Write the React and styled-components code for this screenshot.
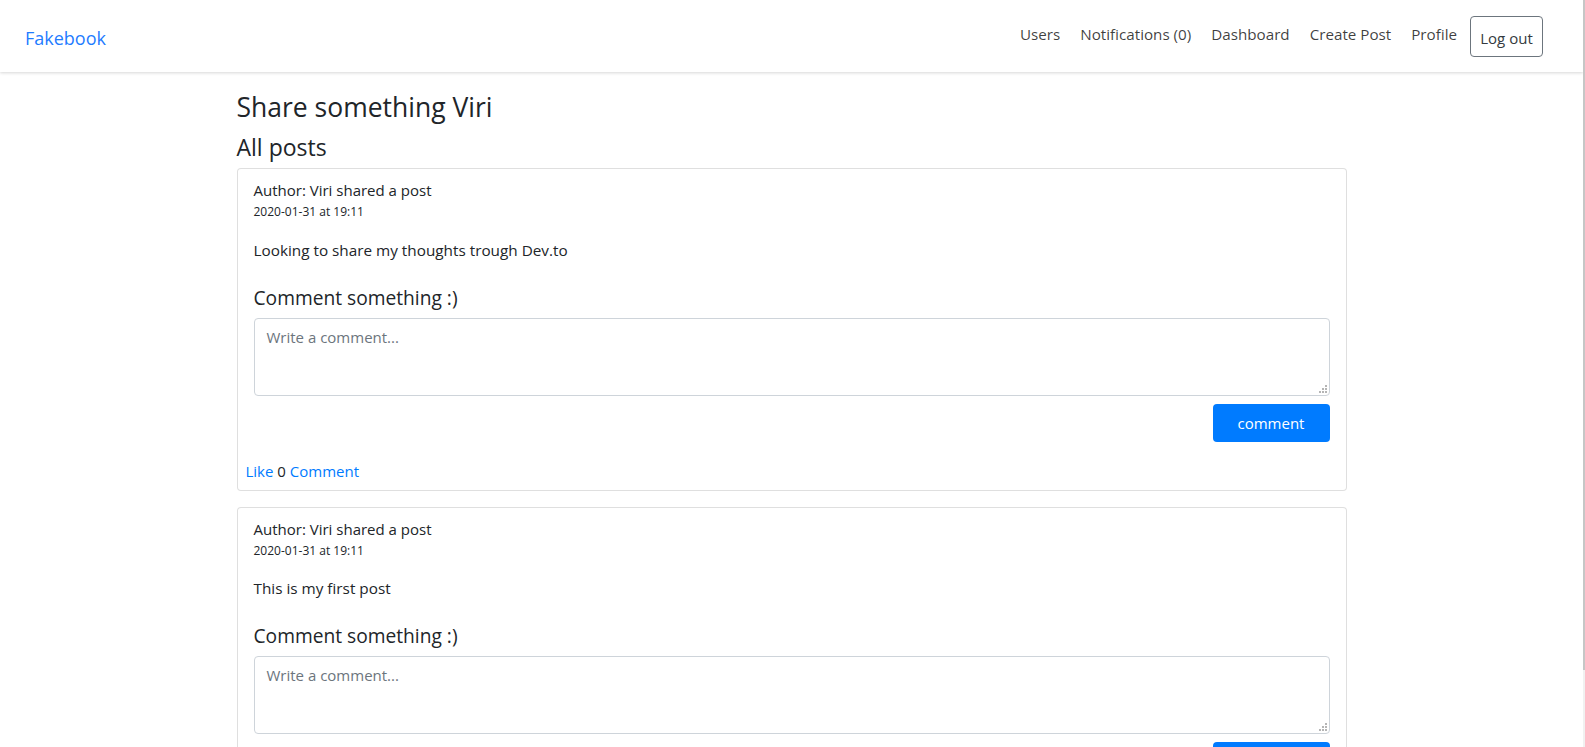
import React from 'react';
import styled, { createGlobalStyle } from 'styled-components';

const POSTS = [
  { id: 1, author: 'Viri', date: '2020-01-31 at 19:11', text: 'Looking to share my thoughts trough Dev.to', likes: 0 },
  { id: 2, author: 'Viri', date: '2020-01-31 at 19:11', text: 'This is my first post', likes: 0 },
];

const NAV_ITEMS = ['Users', 'Notifications (0)', 'Dashboard', 'Create Post', 'Profile'];

// dots of the textarea resize grip, bottom-right triangle
const GRIP_DOTS = [
  [6, 0],
  [3, 3],
  [6, 3],
  [0, 6],
  [3, 6],
  [6, 6],
];

function ResizeGrip() {
  return (
    <Grip width="8" height="8" viewBox="0 0 8 8">
      {GRIP_DOTS.map(([x, y]) => (
        <rect key={`${x}-${y}`} x={x} y={y} width="2" height="2" fill="#b5b5b5" />
      ))}
    </Grip>
  );
}

export default function App() {
  return (
    <>
      <GlobalStyle />
      <ScrollTrack>
        <ScrollThumb />
      </ScrollTrack>
      <Navbar>
        <Brand href="#">Fakebook</Brand>
        <NavList>
          {NAV_ITEMS.map((item) => (
            <NavLink key={item} href="#">
              {item}
            </NavLink>
          ))}
          <LogoutButton type="button">Log out</LogoutButton>
        </NavList>
      </Navbar>

      <Container>
        <Title>Share something Viri</Title>
        <SubTitle>All posts</SubTitle>
        <PostList>
          {POSTS.map((post) => (
            <Card key={post.id}>
              <PostBody>
                <Author>Author: {post.author} shared a post</Author>
                <PostDate>{post.date}</PostDate>
                <PostText>{post.text}</PostText>
                <CommentHeading>Comment something :)</CommentHeading>
                <BoxWrap>
                  <CommentBox placeholder="Write a comment..." />
                  <ResizeGrip />
                </BoxWrap>
                <ButtonRow>
                  <CommentButton type="button">comment</CommentButton>
                </ButtonRow>
              </PostBody>
              <CardFooter>
                <ActionLink href="#">Like</ActionLink> {post.likes}{' '}
                <ActionLink href="#">Comment</ActionLink>
              </CardFooter>
            </Card>
          ))}
        </PostList>
      </Container>
    </>
  );
}

const GlobalStyle = createGlobalStyle`
  html {
    scrollbar-width: none;
  }

  ::-webkit-scrollbar {
    display: none;
  }

  body {
    margin: 0;
    padding-right: 2px;
    background: #fff;
    color: #212529;
    font-family: "Open Sans", "Noto Sans", sans-serif;
    font-size: 15px;
    line-height: 24px;
  }

  * {
    box-sizing: border-box;
  }
`;

const ScrollTrack = styled.div`
  position: fixed;
  top: 0;
  right: 0;
  bottom: 0;
  width: 2px;
  background: #f1f1f1;
  z-index: 10;
`;

const ScrollThumb = styled.div`
  height: 670px;
  background: #c6c6c6;
`;

const Navbar = styled.nav`
  height: 72px;
  display: flex;
  align-items: center;
  justify-content: space-between;
  padding: 0 40px 0 25px;
  background: #fff;
  box-shadow: 0 1px 3px rgba(0, 0, 0, 0.16);
`;

const Brand = styled.a`
  padding-top: 4px;
  font-size: 18px;
  line-height: 24px;
  color: #1f7cff;
  text-decoration: none;
`;

const NavList = styled.div`
  display: flex;
  align-items: center;
`;

const NavLink = styled.a`
  padding: 0 10px;
  margin-bottom: 5px;
  font-size: 15.2px;
  line-height: 24px;
  color: rgba(0, 0, 0, 0.76);
  text-decoration: none;
`;

const LogoutButton = styled.button`
  width: 73px;
  height: 41px;
  margin-left: 3px;
  padding: 3px 0 0;
  background: #fff;
  border: 1px solid #6c757d;
  border-radius: 4px;
  color: #343a40;
  font-family: inherit;
  font-size: 15px;
  line-height: 24px;
`;

const Container = styled.main`
  width: 1110px;
  margin: 0 auto;
`;

const Title = styled.h3`
  margin: 19px 0 0;
  font-size: 26.5px;
  font-weight: 400;
  line-height: 33.6px;
`;

const SubTitle = styled.h4`
  margin: 8px 0 7px;
  font-size: 23px;
  font-weight: 400;
  line-height: 28.8px;
`;

const PostList = styled.div`
  display: flex;
  flex-direction: column;
  gap: 16px;
  padding-bottom: 1px;
`;

const Card = styled.article`
  padding: 9px 8px 7px;
  border: 1px solid rgba(0, 0, 0, 0.125);
  border-radius: 4px;
  background: #fff;
`;

const PostBody = styled.div`
  padding: 0 8px;
`;

const Author = styled.div`
  font-size: 15px;
  line-height: 24px;
`;

const PostDate = styled.small`
  display: block;
  font-size: 12px;
  line-height: 19.2px;
  margin-bottom: 16px;
`;

const PostText = styled.p`
  margin: 0 0 24px;
  font-size: 15.3px;
  line-height: 24px;
`;

const CommentHeading = styled.h5`
  margin: 0 0 8px;
  font-size: 19.2px;
  font-weight: 400;
  line-height: 24px;
`;

const BoxWrap = styled.div`
  position: relative;
`;

const CommentBox = styled.textarea`
  display: block;
  width: 100%;
  height: 78px;
  padding: 6px 12px;
  border: 1px solid #ced4da;
  border-radius: 4px;
  color: #495057;
  font-family: inherit;
  font-size: 15px;
  line-height: 24px;
  resize: none;

  &::placeholder {
    color: #6c757d;
  }
`;

const Grip = styled.svg`
  position: absolute;
  right: 3px;
  bottom: 3px;
  pointer-events: none;
`;

const ButtonRow = styled.div`
  display: flex;
  justify-content: flex-end;
  margin-top: 8px;
`;

const CommentButton = styled.button`
  width: 117px;
  height: 38px;
  padding: 0;
  border: none;
  border-radius: 4px;
  background: #007bff;
  color: #fff;
  font-family: inherit;
  font-size: 15px;
  line-height: 24px;
`;

const CardFooter = styled.div`
  margin-top: 17px;
  font-size: 15px;
  line-height: 24px;
`;

const ActionLink = styled.a`
  color: #007bff;
  text-decoration: none;
`;
